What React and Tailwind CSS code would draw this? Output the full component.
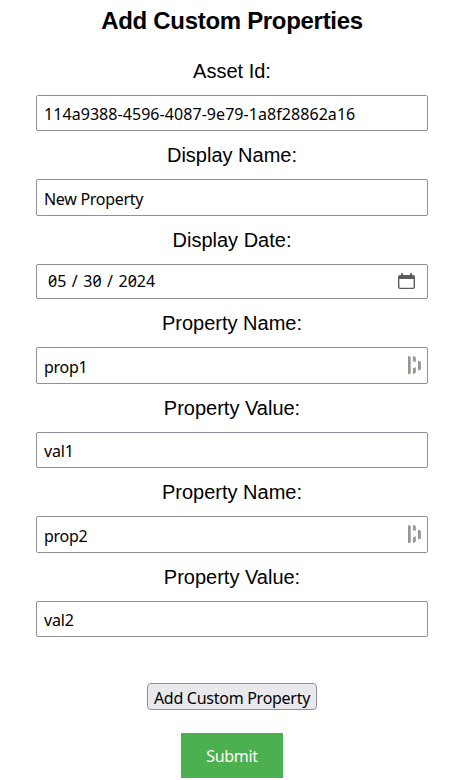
import React from 'react';

const fields = [
  { label: 'Asset Id:', value: '114a9388-4596-4087-9e79-1a8f28862a16', height: 'h-9', text: 'pt-px tracking-[0.06px]' },
  { label: 'Display Name:', value: 'New Property', height: 'h-[37px]', text: 'pt-[3px] tracking-[-0.3px]' },
  { label: 'Display Date:', date: ['05', '30', '2024'], height: 'h-[35px]' },
  { label: 'Property Name:', value: 'prop1', height: 'h-[37px]', text: 'pt-[3px] tracking-[-0.3px]', bars: true },
  { label: 'Property Value:', value: 'val1', height: 'h-9', text: 'pt-px tracking-[-0.2px]' },
  { label: 'Property Name:', value: 'prop2', height: 'h-[37px]', text: 'pt-[3px] tracking-[-0.3px]', bars: true },
  { label: 'Property Value:', value: 'val2', height: 'h-9', text: 'pt-px tracking-[-0.2px]' },
];

function CalendarIcon() {
  return (
    <svg width="17" height="17" viewBox="0 0 17 17" className="block shrink-0">
      <path
        fill="#5b5b5b"
        fillRule="evenodd"
        d="M3 2V0.3h2V2h7V0.3h2V2h1a2 2 0 0 1 2 2v10a2 2 0 0 1-2 2H2a2 2 0 0 1-2-2V4a2 2 0 0 1 2-2ZM1.400 6v7.900q0 .8.8.8h12.6q.8 0 .8-.8V6Z"
      />
    </svg>
  );
}

function BarsIcon() {
  return (
    <svg width="14" height="19" viewBox="0 0 14 19" fill="#9a9590" className="block shrink-0">
      <path d="M0 0l2.700.7v16.800L0 18.200ZM5 0l2.800 1V6L5 5.200ZM5 12.200l2.800-1v5.600L5 18ZM10 4.700l2.900 1.100v7.600L10 14.500Z" />
    </svg>
  );
}

function Field({ label, value, date, height, text, bars }) {
  return (
    <label className="flex flex-col">
      <span className="h-12 text-center text-[20px] leading-[49px]">{label}</span>
      <span className={`flex items-center justify-between rounded-[2px] border border-[#8f8f9d] bg-white pl-[7px] ${height}`}>
        {date ? (
          <>
            <span className="flex items-center gap-[5.5px] pb-px pl-1 font-['Noto_Sans',sans-serif] text-[16px] leading-none slashed-zero">
              <span>{date[0]}</span>
              <span>/</span>
              <span>{date[1]}</span>
              <span>/</span>
              <span>{date[2]}</span>
            </span>
            <span className="pr-3">
              <CalendarIcon />
            </span>
          </>
        ) : (
          <>
            <input
              className={`h-full min-w-0 flex-1 bg-transparent font-['Noto_Sans',sans-serif] text-[16px] outline-none ${text}`}
              defaultValue={value}
            />
            {bars && (
              <span className="pr-[5px]">
                <BarsIcon />
              </span>
            )}
          </>
        )}
      </span>
    </label>
  );
}

export default function App() {
  return (
    <main className="h-[780px] w-[460px] overflow-hidden bg-white font-['Liberation_Sans',Arial,sans-serif] text-black">
      <h1 className="h-[47px] pl-1 text-center text-[24px] leading-[42px] font-bold tracking-[-0.31px]">Add Custom Properties</h1>
      <form className="flex flex-col pr-8 pl-9" onSubmit={(e) => e.preventDefault()}>
        {fields.map((field, i) => (
          <Field key={i} {...field} />
        ))}
        <button
          type="button"
          className="mt-[46px] h-[27px] w-[170px] self-center rounded-[4px] border border-[#8f8f9d] bg-[#e9e9ed] pt-[2px] font-['Noto_Sans',sans-serif] text-[16px] leading-none tracking-[-0.27px] whitespace-nowrap"
        >
          Add Custom Property
        </button>
        <button
          type="submit"
          className="mt-[23px] h-[45px] w-[102px] self-center bg-[#4caf50] pt-px font-['Noto_Sans',sans-serif] text-[16px] leading-none tracking-[-0.35px] text-white"
        >
          Submit
        </button>
      </form>
    </main>
  );
}
